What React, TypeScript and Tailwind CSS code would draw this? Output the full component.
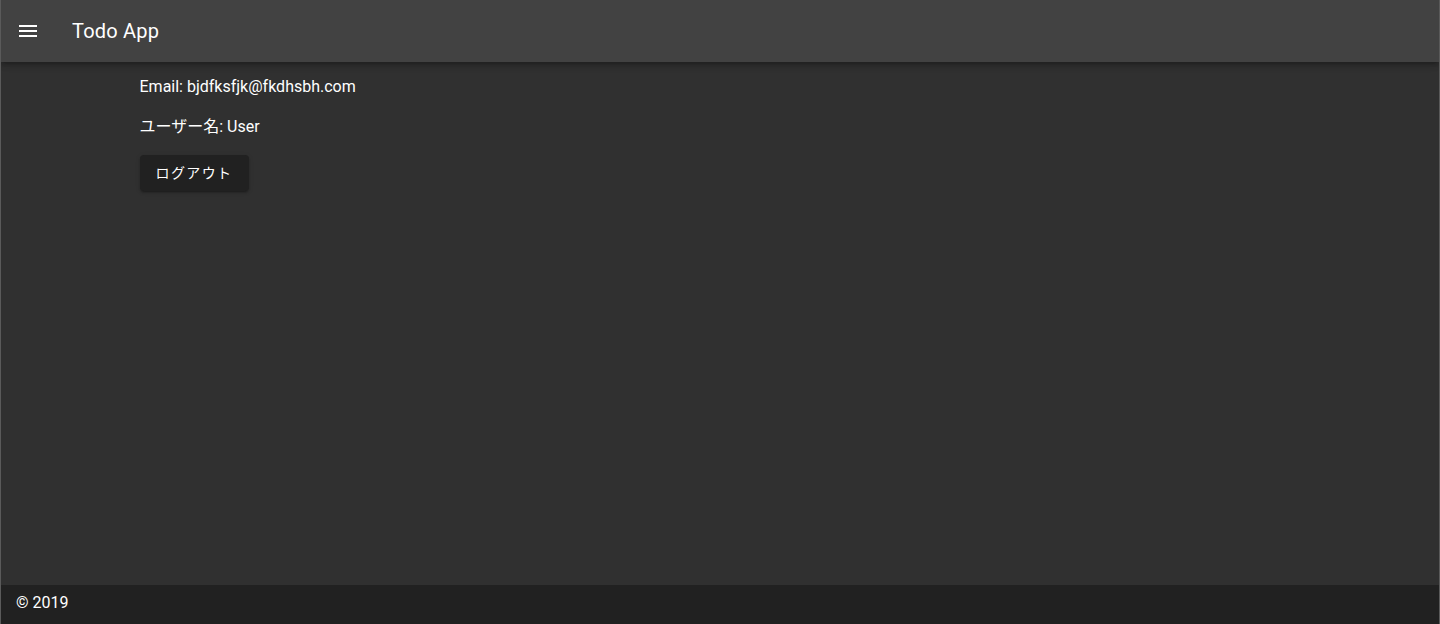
export default function App() {
    return (
        <div
            className="flex h-[624px] flex-col overflow-hidden border-x border-[#5a5a5a] bg-[#303030] text-white"
            style={{ fontFamily: 'Roboto, "Noto Sans CJK JP", sans-serif' }}
        >
            {/* App bar */}
            <header className="relative z-10 flex h-[62px] shrink-0 items-center bg-[#424242] px-[15px] shadow-[0_2px_4px_-1px_rgba(0,0,0,0.2),0_4px_5px_0_rgba(0,0,0,0.14),0_1px_10px_0_rgba(0,0,0,0.12)]">
                <button type="button" className="flex h-6 w-6 items-center justify-center">
                    <svg className="h-6 w-6" viewBox="0 0 24 24" fill="currentColor">
                        <path d="M3 18h18v-2H3v2zm0-5h18v-2H3v2zm0-7v2h18V6H3z" />
                    </svg>
                </button>
                <h1 className="ml-8 text-[20px] leading-none font-normal tracking-[0.01em]">Todo App</h1>
            </header>

            {/* Content */}
            <main className="flex-1">
                <div className="mx-auto max-w-[1185px] px-3 pt-[13px]">
                    <p className="mb-4 text-base leading-6">Email: bjdfksfjk@fkdhsbh.com</p>
                    <p className="mb-4 text-base leading-6">ユーザー名: User</p>
                    <button
                        type="button"
                        className="h-9 w-[109px] rounded bg-[#212121] text-sm tracking-[0.1em] shadow-[0_3px_1px_-2px_rgba(0,0,0,0.2),0_2px_2px_0_rgba(0,0,0,0.14),0_1px_5px_0_rgba(0,0,0,0.12)]"
                    >
                        ログアウト
                    </button>
                </div>
            </main>

            {/* Footer */}
            <footer className="flex h-[39px] shrink-0 items-center bg-[#212121] px-[15px] pb-1 text-base">
                <span>© 2019</span>
            </footer>
        </div>
    );
}
